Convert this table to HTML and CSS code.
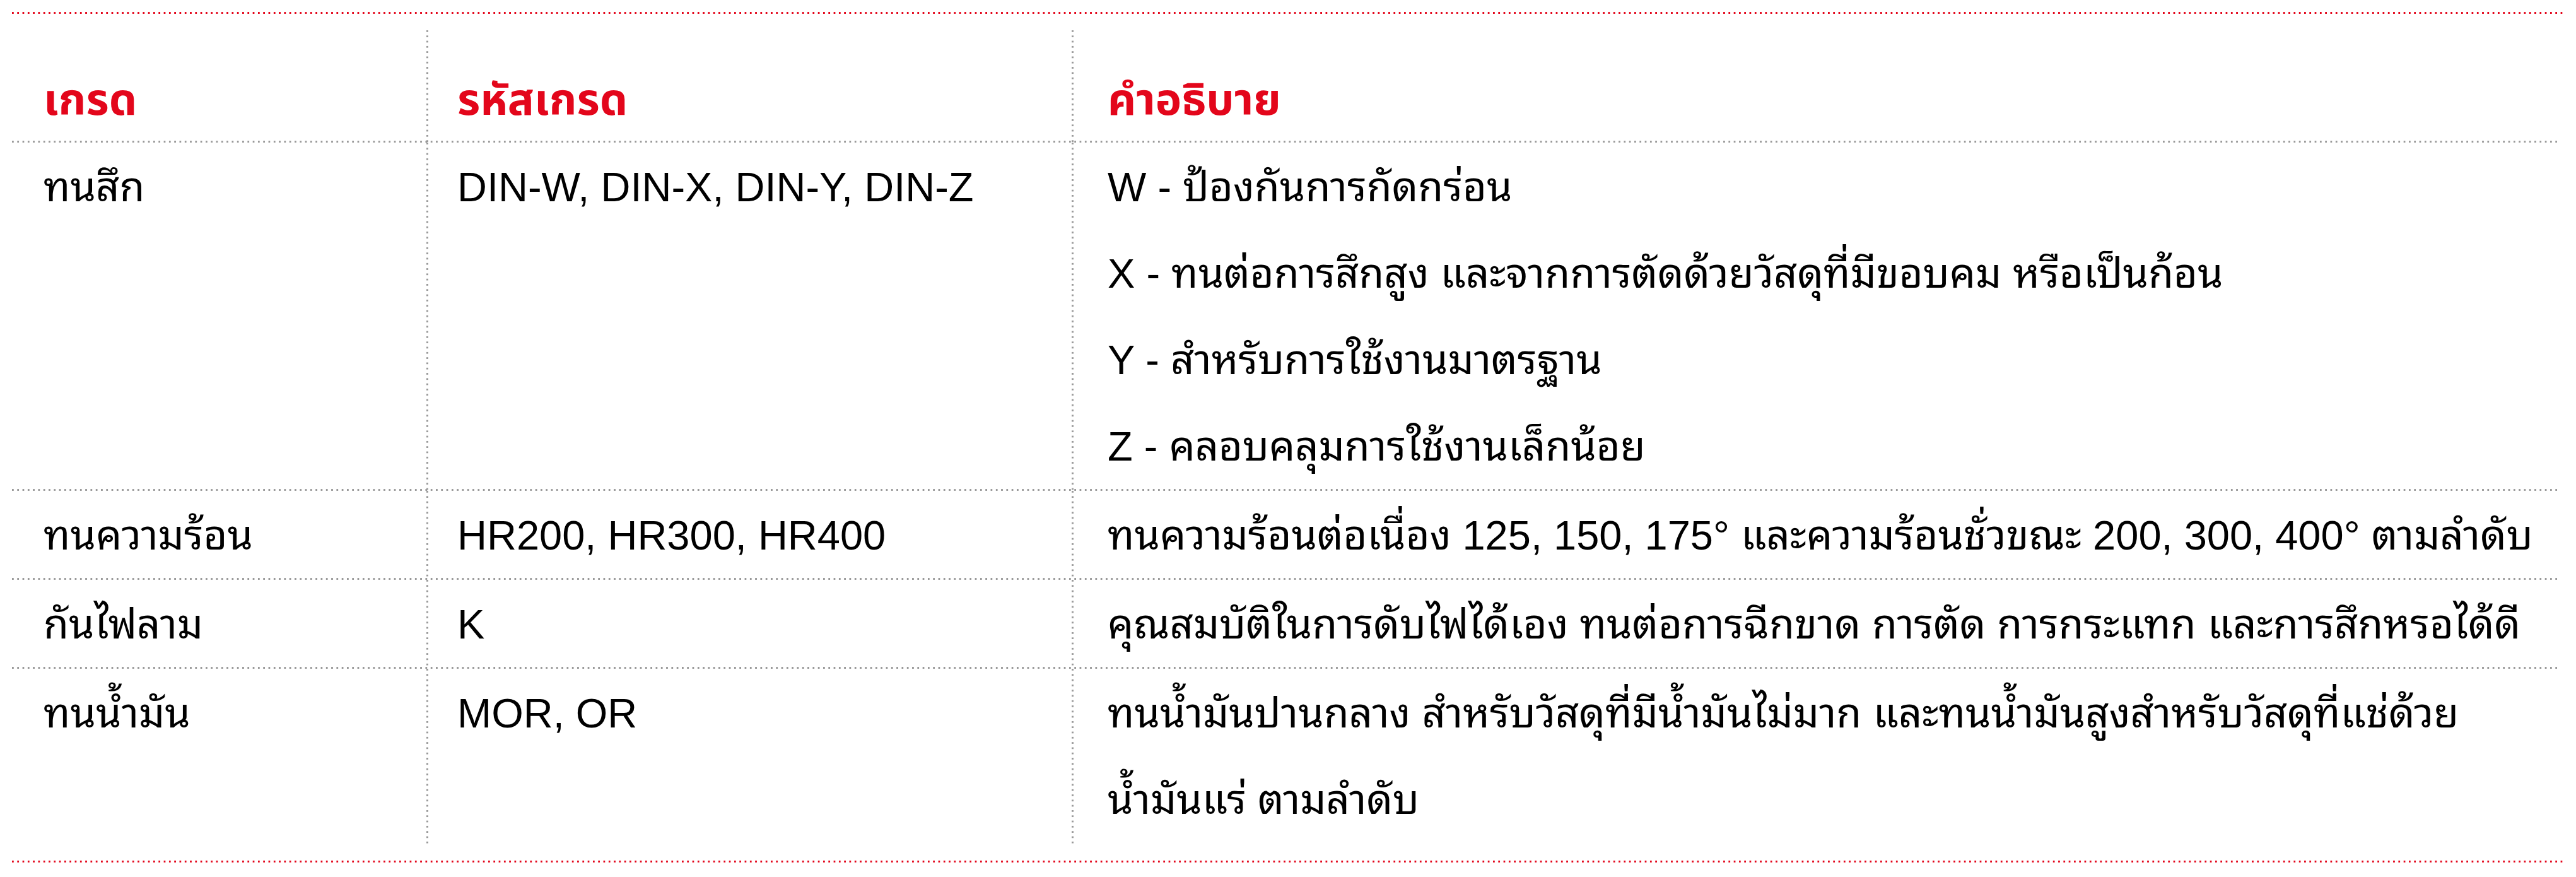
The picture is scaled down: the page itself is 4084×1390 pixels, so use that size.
FILE: index.html
```html
<!DOCTYPE html>
<html lang="th">
<head>
<meta charset="utf-8">
<title>เกรด</title>
<link rel="stylesheet" href="styles.css">
</head>
<body>
<div class="wrap">
  <div class="grades">
    <div class="row head">
      <div class="cell c1">เกรด</div>
      <div class="cell c2">รหัสเกรด</div>
      <div class="cell c3">คำอธิบาย</div>
    </div>
    <div class="row">
      <div class="cell c1"><p>ทนสึก</p></div>
      <div class="cell c2"><p>DIN-W, DIN-X, DIN-Y, DIN-Z</p></div>
      <div class="cell c3">
        <p>W - ป้องกันการกัดกร่อน</p>
        <p>X - ทนต่อการสึกสูง และจากการตัดด้วยวัสดุที่มีขอบคม หรือเป็นก้อน</p>
        <p>Y - สำหรับการใช้งานมาตรฐาน</p>
        <p>Z - คลอบคลุมการใช้งานเล็กน้อย</p>
      </div>
    </div>
    <div class="row">
      <div class="cell c1"><p>ทนความร้อน</p></div>
      <div class="cell c2"><p>HR200, HR300, HR400</p></div>
      <div class="cell c3"><p>ทนความร้อนต่อเนื่อง 125, 150, 175° และความร้อนชั่วขณะ 200, 300, 400° ตามลำดับ</p></div>
    </div>
    <div class="row">
      <div class="cell c1"><p>กันไฟลาม</p></div>
      <div class="cell c2"><p>K</p></div>
      <div class="cell c3"><p>คุณสมบัติในการดับไฟได้เอง ทนต่อการฉีกขาด การตัด การกระแทก และการสึกหรอได้ดี</p></div>
    </div>
    <div class="row">
      <div class="cell c1"><p>ทนน้ำมัน</p></div>
      <div class="cell c2"><p>MOR, OR</p></div>
      <div class="cell c3"><p>ทนน้ำมันปานกลาง สำหรับวัสดุที่มีน้ำมันไม่มาก และทนน้ำมันสูงสำหรับวัสดุที่แช่ด้วย<span class="keep">น้ำมันแร่</span> ตามลำดับ</p></div>
    </div>
  </div>
</div>
</body>
</html>
```
FILE: styles.css
```css
html, body {
  margin: 0;
  padding: 0;
  background: #ffffff;
}

body {
  font-family: "Liberation Sans", "Noto Sans Thai Looped", "Noto Sans Thai", sans-serif;
  color: #000000;
}

.wrap {
  margin: 19px 18px 0 19px;
  padding: 29px 0 29px;
  background-image:
    linear-gradient(to right, #e3061b 3px, transparent 3px),
    linear-gradient(to right, #e3061b 3px, transparent 3px);
  background-size: 8.3px 3px, 8.3px 3px;
  background-position: 0 0, 0 100%;
  background-repeat: repeat-x, repeat-x;
}

.grades {
  margin-right: 12px;
  display: flex;
  flex-direction: column;
}

.row {
  display: grid;
  grid-template-columns: 657px 1023px 1fr;
  background-image: linear-gradient(to right, #9a9a9a 3px, transparent 3px);
  background-size: 8.3px 3px;
  background-position: 0 100%;
  background-repeat: repeat-x;
}

.row:last-child {
  background-image: none;
}

.cell {
  padding: 0 16px 0 50px;
  font-size: 65px;
  line-height: 137px;
}

.c2, .c3 {
  background-image: linear-gradient(to bottom, #9a9a9a 3px, transparent 3px);
  background-size: 3px 8.3px;
  background-position: 0 0;
  background-repeat: repeat-y;
}

.c2 {
  padding-left: 49px;
}

.c3 {
  padding-left: 57px;
}

.cell p {
  margin: 0;
}

.keep {
  white-space: nowrap;
}

.head .cell {
  font-family: "Noto Sans Thai", sans-serif;
  font-weight: 700;
  font-stretch: 75%;
  color: #e3061b;
  font-size: 70px;
  padding-top: 48px;
  line-height: 130px;
}

.row:not(.head) .cell {
  padding-top: 2px;
  padding-bottom: 2px;
}
```
